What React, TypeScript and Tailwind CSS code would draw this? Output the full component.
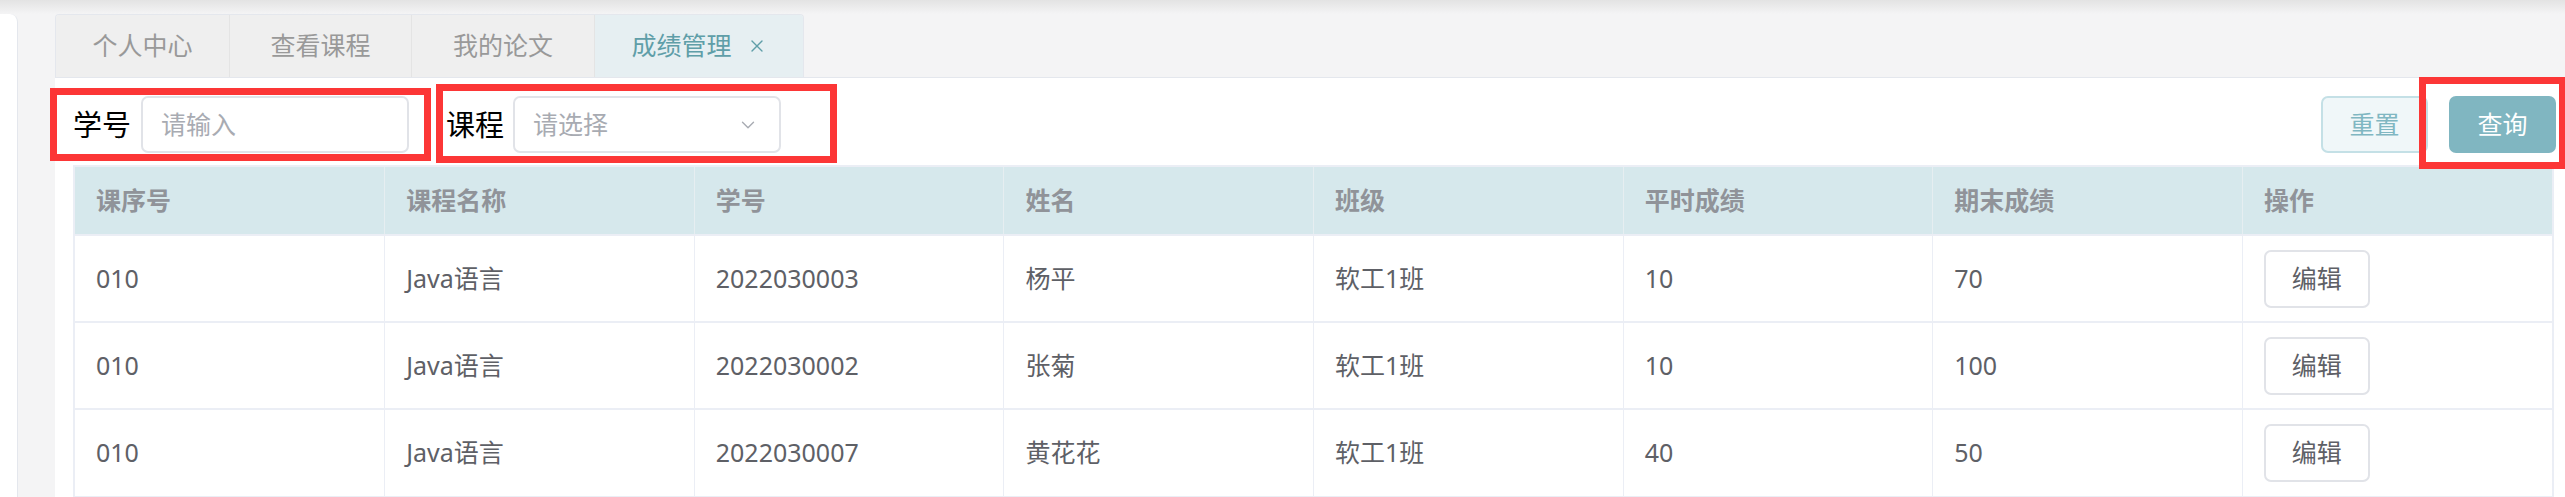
import React from "react";
import { ChevronDown, X } from "lucide-react";

const heads = ["课序号", "课程名称", "学号", "姓名", "班级", "平时成绩", "期末成绩", "操作"];

const rows = [
  { no: "010", course: "Java语言", sid: "2022030003", name: "杨平", cls: "软工1班", usual: "10", final: "70" },
  { no: "010", course: "Java语言", sid: "2022030002", name: "张菊", cls: "软工1班", usual: "10", final: "100" },
  { no: "010", course: "Java语言", sid: "2022030007", name: "黄花花", cls: "软工1班", usual: "40", final: "50" },
];

const tabs = [
  { label: "个人中心", w: "w-[174px]" },
  { label: "查看课程", w: "w-[182px]" },
  { label: "我的论文", w: "w-[183px]" },
];

// red annotation frame drawn over a group
const Mark = ({ className }: { className: string }) => (
  <div className={`pointer-events-none absolute border-[7px] border-[#fc3636] ${className}`} />
);

const App = () => {
  return (
    <div
      className="h-screen w-full overflow-hidden bg-[#f4f4f5] flex flex-col"
      style={{ fontFamily: '"Noto Sans", "Noto Sans CJK SC", sans-serif' }}
    >
      {/* top shadow */}
      <div className="h-[14px] shrink-0 bg-linear-to-b from-[#e3e3e3] to-[#f4f4f5]" />

      <div className="flex flex-1 min-h-0">
        {/* sidebar edge */}
        <div className="w-[18px] shrink-0 bg-white border-r border-[#e4e7ed] rounded-tr-[8px]" />

        <div className="flex-1 min-w-0 ml-[37px] flex flex-col">
          {/* Tabs */}
          <div className="flex h-[64px] shrink-0 border-b border-[#e4e7ed]">
            <div className="flex rounded-t-[4px] border-t border-l border-r border-[#e4e7ed] overflow-hidden">
              {tabs.map((t) => (
                <div
                  key={t.label}
                  className={`${t.w} flex items-center justify-center bg-[#efefef] border-r border-[#e4e4e4] text-[25px] text-[#999999]`}
                >
                  {t.label}
                </div>
              ))}
              <div className="w-[208px] flex items-center justify-center gap-[15px] bg-[#e6eff2] text-[25px] text-[#5f9ea8]">
                成绩管理
                <X size={20} strokeWidth={1.6} />
              </div>
            </div>
          </div>

          {/* Panel */}
          <div className="flex-1 bg-white pl-[18px] pr-[9px] pt-[18px]">
            {/* Filter row */}
            <div className="flex items-center h-[57px]">
              <div className="relative flex items-center gap-[10px]">
                <span className="text-[29px] text-black">学号</span>
                <div className="w-[268px] h-[57px] rounded-[7px] border-2 border-[#e1e3e8] flex items-center px-[18px] text-[25px] text-[#a8abb2]">
                  请输入
                </div>
                <Mark className="-left-[23px] -right-[22px] -top-[8px] -bottom-[8px]" />
              </div>

              <div className="relative flex items-center gap-[9px] ml-[37px]">
                <span className="text-[29px] text-black">课程</span>
                <div className="w-[268px] h-[57px] rounded-[7px] border-2 border-[#e1e3e8] flex items-center justify-between pl-[18px] pr-[20px] text-[25px] text-[#a8abb2]">
                  请选择
                  <ChevronDown size={22} strokeWidth={1.5} className="text-[#a8abb2]" />
                </div>
                <Mark className="-left-[10px] -right-[56px] -top-[12px] -bottom-[10px]" />
              </div>

              <div className="ml-auto flex items-center gap-[21px]">
                <button className="w-[107px] h-[57px] rounded-[7px] border-2 border-[#c4e0e6] bg-[#f0f7f9] text-[25px] text-[#80b7c2]">
                  重置
                </button>
                <div className="relative">
                  <button className="w-[107px] h-[57px] rounded-[7px] bg-[#80b6c1] text-[25px] text-white">
                    查询
                  </button>
                  <Mark className="-left-[30px] -right-[10px] -top-[19px] -bottom-[16px]" />
                </div>
              </div>
            </div>

            {/* Table */}
            <div className="mt-[12px] mr-[2px] border-2 border-[#ebeef5]">
              <table className="w-full table-fixed border-collapse">
                <thead>
                  <tr className="bg-[#d6e8ec] h-[68px]">
                    {heads.map((h) => (
                      <th
                        key={h}
                        className="text-left font-bold px-[21px] text-[25px] text-[#909399] border-l border-[#e6eef1] first:border-l-0"
                      >
                        {h}
                      </th>
                    ))}
                  </tr>
                </thead>
                <tbody>
                  {rows.map((r, i) => (
                    <tr key={i} className="h-[87px] border-t-2 border-[#ebeef5] text-[25px] text-[#5e6066]">
                      <td className="px-[21px]">{r.no}</td>
                      <td className="px-[21px] border-l border-[#ebeef5]">{r.course}</td>
                      <td className="px-[21px] border-l border-[#ebeef5]">{r.sid}</td>
                      <td className="px-[21px] border-l border-[#ebeef5]">{r.name}</td>
                      <td className="px-[21px] border-l border-[#ebeef5]">{r.cls}</td>
                      <td className="px-[21px] border-l border-[#ebeef5]">{r.usual}</td>
                      <td className="px-[21px] border-l border-[#ebeef5]">{r.final}</td>
                      <td className="px-[21px] border-l border-[#ebeef5]">
                        <button className="w-[106px] h-[58px] rounded-[7px] border-2 border-[#e1e3e8] bg-white text-[25px] text-[#5e6066]">
                          编辑
                        </button>
                      </td>
                    </tr>
                  ))}
                </tbody>
              </table>
            </div>
          </div>
        </div>
      </div>
    </div>
  );
};

export default App;
